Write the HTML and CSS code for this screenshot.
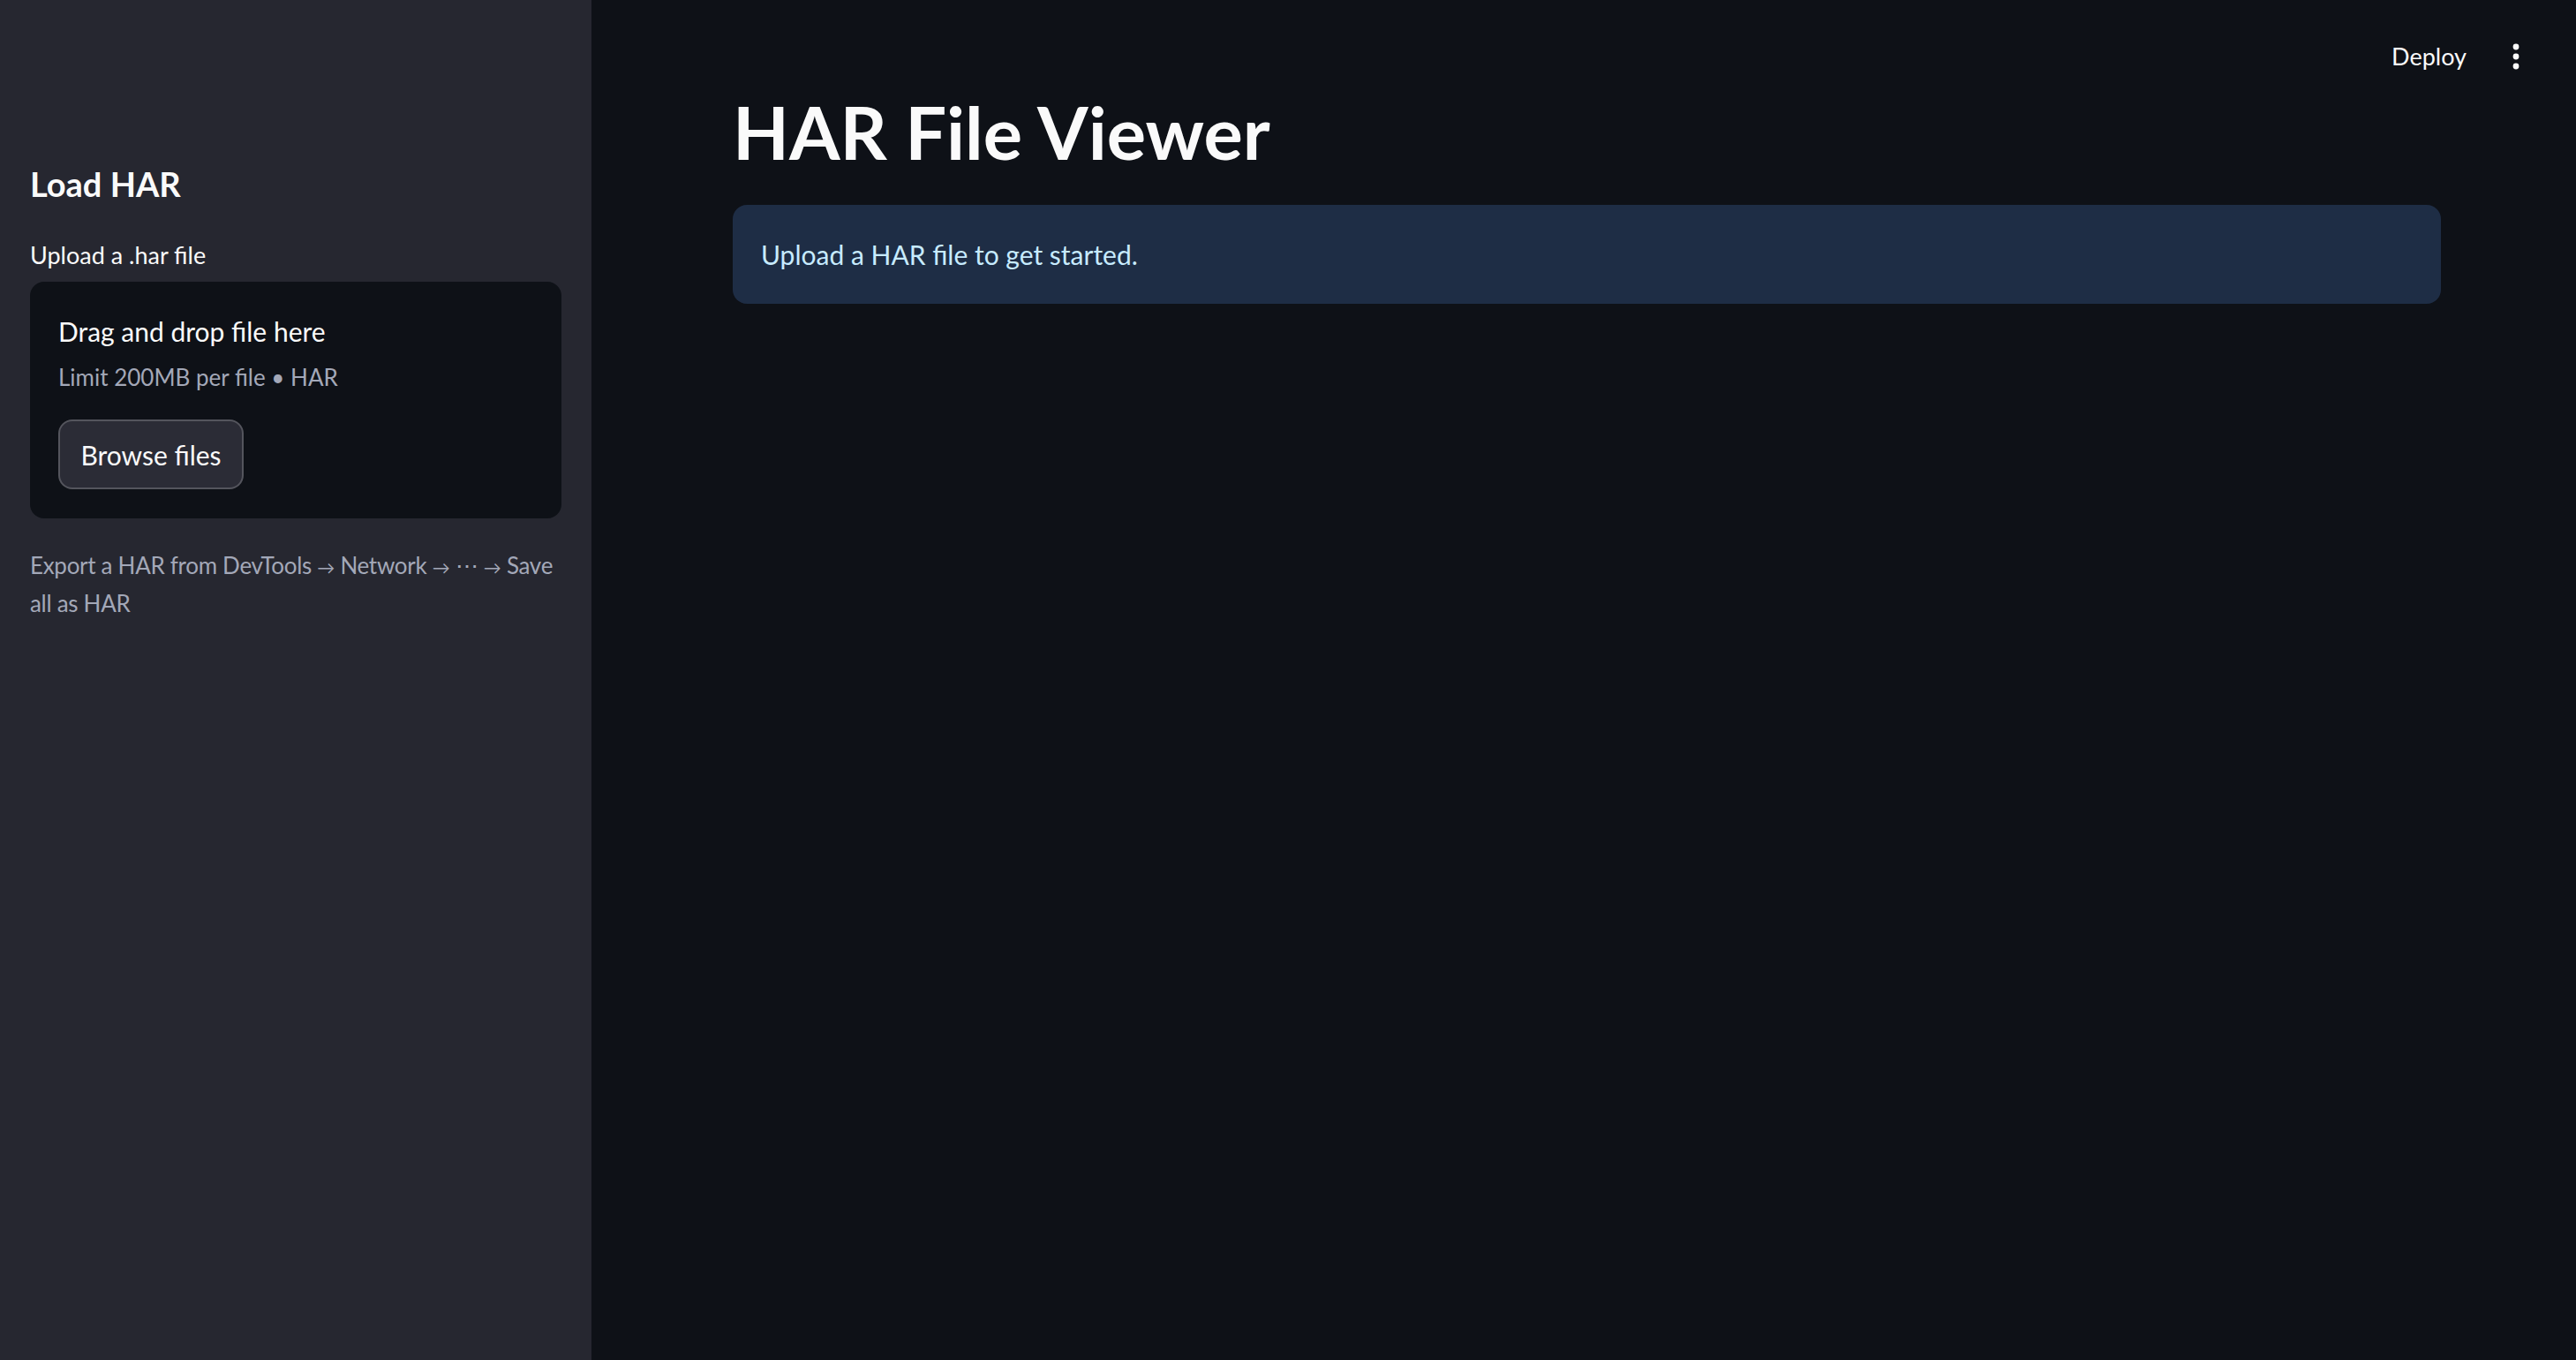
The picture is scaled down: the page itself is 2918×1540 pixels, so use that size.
FILE: index.html
```html
<!DOCTYPE html>
<html lang="en">
<head>
<meta charset="utf-8">
<title>HAR File Viewer</title>
<link rel="stylesheet" href="styles.css">
</head>
<body>
<div class="app">
  <aside class="sidebar">
    <h2 class="side-title">Load HAR</h2>
    <div class="field-label">Upload a .har file</div>
    <section class="dropzone">
      <div class="dz-title">Drag and drop file here</div>
      <div class="dz-limit">Limit 200MB per file • HAR</div>
      <button class="browse" type="button">Browse files</button>
    </section>
    <p class="caption">Export a HAR from DevTools <span class="arr">→</span> Network <span class="arr">→</span> ⋯ <span class="arr">→</span> Save all as HAR</p>
  </aside>
  <main class="main">
    <header class="toolbar">
      <span class="deploy">Deploy</span>
      <span class="menu" aria-label="menu">
        <svg width="12" height="30" viewBox="0 0 12 30"><circle cx="6" cy="4" r="3.4" fill="#fafafa"/><circle cx="6" cy="15" r="3.4" fill="#fafafa"/><circle cx="6" cy="26" r="3.4" fill="#fafafa"/></svg>
      </span>
    </header>
    <div class="block">
      <h1 class="title">HAR File Viewer</h1>
      <div class="info">Upload a HAR file to get started.</div>
    </div>
  </main>
</div>
</body>
</html>
```
FILE: styles.css
```css
* { box-sizing: border-box; }
html, body { margin: 0; padding: 0; height: 100%; }
body {
  font-family: "Lato", "Noto Sans", sans-serif;
  color: #fafafa;
  background: #0e1117;
}
.app { display: flex; height: 100vh; }
.sidebar {
  width: 670px;
  flex: none;
  background: #262730;
  padding: 180px 34px 0 34px;
}
.side-title {
  margin: 0;
  font-size: 38px;
  font-weight: 700;
  line-height: 56px;
}
.field-label {
  margin-top: 33px;
  font-size: 27px;
  line-height: 40px;
}
.dropzone {
  margin-top: 10px;
  background: #0e1117;
  border-radius: 16px;
  padding: 34px 32px 33px 32px;
}
.dz-title { font-size: 30px; line-height: 44px; }
.dz-limit { font-size: 26px; line-height: 40px; color: #a3a8b8; margin-top: 10px; }
.browse {
  margin-top: 28px;
  height: 79px;
  width: 210px;
  background: #2b2c36;
  border: 2px solid rgba(250,250,250,0.2);
  border-radius: 16px;
  color: #fafafa;
  font-family: inherit;
  font-size: 30px;
  padding: 0;
}
.caption {
  margin: 32px 0 0 0;
  font-size: 26px;
  line-height: 43px;
  letter-spacing: -0.3px;
  color: #a3a8b8;
}
.arr { font-size: 20px; line-height: 1; }
.main { flex: 1; position: relative; }
.toolbar {
  position: absolute;
  top: 0; right: 0;
  height: 126px;
  display: flex;
  align-items: flex-start;
  padding: 44px 62px 0 0;
  gap: 50px;
}
.deploy { font-size: 27px; line-height: 40px; }
.menu { display: flex; padding-top: 5px; }
.block { padding: 96px 153px 0 160px; }
.title {
  margin: 0;
  font-size: 83px;
  font-weight: 700;
  line-height: 106px;
}
.info {
  margin-top: 30px;
  background: #1e2d45;
  color: #c7ebff;
  border-radius: 16px;
  padding: 32px;
  font-size: 30px;
  line-height: 48px;
}
```
